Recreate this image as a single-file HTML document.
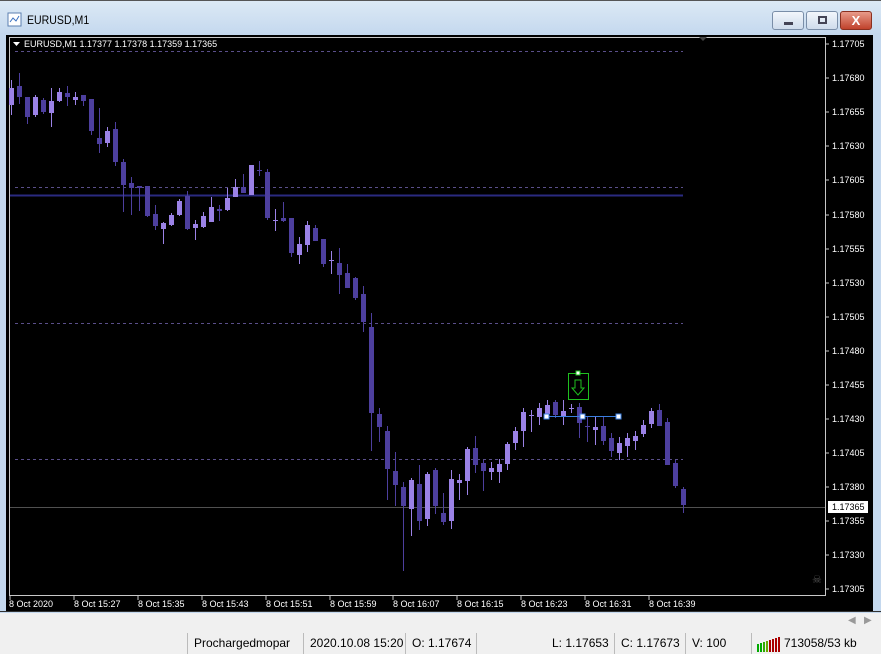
<!DOCTYPE html>
<html><head><meta charset="utf-8"><style>
*{margin:0;padding:0;box-sizing:border-box}
body{width:881px;height:654px;overflow:hidden;background:#f0f0f0;font-family:"Liberation Sans",sans-serif;position:relative}
.tb{position:absolute;left:0;top:0;width:881px;height:35px;background:linear-gradient(#dce9f5,#c4d8ee);border-top:1px solid #555}
.frame{position:absolute;left:0;top:33px;width:881px;height:580px;background:#c4d8ee}
.chart{position:absolute;left:6px;top:35px;width:867px;height:576px;background:#000}
.btn{position:absolute;top:11px;width:32px;height:19px;border:1px solid #7a8ea8;border-radius:3px;background:linear-gradient(#f2f6fb,#cfdcec)}
.t{position:absolute;white-space:nowrap}
.sb{position:absolute;top:633px;height:21px;font-size:12px;color:#000;border-left:1px solid #bbb;padding-left:6px;line-height:21px}
</style></head><body>
<div class="tb"></div>
<div class="frame"></div>
<svg style="position:absolute;left:7px;top:12px" width="16" height="16"><rect x="1" y="1" width="13" height="13" fill="#fff" stroke="#5b7fb0"/><path d="M3 10l3-4 3 3 3-5" stroke="#3a70c0" fill="none"/></svg>
<div class="t" style="left:27px;top:13px;font-size:12px;color:#000;transform:scaleX(0.88);transform-origin:left">EURUSD,M1</div>
<div class="btn" style="left:772px"><div style="position:absolute;left:11px;top:10px;width:9px;height:3px;background:#445;"></div></div>
<div class="btn" style="left:806px"><div style="position:absolute;left:11px;top:4px;width:9px;height:8px;border:2px solid #445"></div></div>
<div class="btn" style="left:840px;background:linear-gradient(#e89b8a,#c0422c);border-color:#8a3020;color:#fff;font-weight:bold;font-size:13px;text-align:center;line-height:17px">X</div>
<div class="chart"></div>
<svg id="c" style="position:absolute;left:0;top:0" width="881" height="612" font-family="Liberation Sans" font-size="9"></svg>
<div style="position:absolute;left:0;top:611px;width:881px;height:1px;background:#333"></div>
<div class="t" style="left:848px;top:615px;font-size:10px;color:#999">&#9664;&nbsp;&nbsp;&nbsp;&#9654;</div>
<div style="position:absolute;left:0;top:632px;width:881px;height:22px;background:#f0f0f0"></div>
<div class="sb" style="left:187px">Prochargedmopar</div>
<div class="sb" style="left:303px">2020.10.08 15:20</div>
<div class="sb" style="left:405px">O: 1.17674</div>
<div class="sb" style="left:476px;width:70px"></div>
<div class="t" style="left:552px;top:633px;font-size:12px;line-height:21px">L: 1.17653</div>
<div class="sb" style="left:614px">C: 1.17673</div>
<div class="sb" style="left:685px">V: 100</div>
<div class="sb" style="left:751px;width:130px"></div>
<svg style="position:absolute;left:757px;top:637px" width="24" height="15"><g stroke-width="2"><path d="M1 15V7" stroke="#0a0"/><path d="M4 15V6" stroke="#0a0"/><path d="M7 15V5" stroke="#3a0"/><path d="M10 15V4" stroke="#6a0"/><path d="M13 15V3" stroke="#a00"/><path d="M16 15V2" stroke="#a00"/><path d="M19 15V1" stroke="#a00"/><path d="M22 15V0" stroke="#a00"/></g></svg>
<div class="t" style="left:784px;top:633px;font-size:12px;line-height:21px">713058/53 kb</div>
<script>
var s=document.getElementById('c'),h='';
function L(x1,y1,x2,y2,c,w,d){h+='<line x1="'+x1+'" y1="'+y1+'" x2="'+x2+'" y2="'+y2+'" stroke="'+c+'" stroke-width="'+(w||1)+'"'+(d?' stroke-dasharray="'+d+'"':'')+'/>';}
h+='<rect x="9.5" y="37.5" width="816" height="558" fill="none" stroke="#c8c8c8"/>';
[51,187,323,459].forEach(function(y){L(15,y+.5,683,y+.5,'#5a4f8a',1,'3,3')});
L(10,195.5,683,195.5,'#2a2a80',2);
L(10,507.5,825,507.5,'#505050',1);
var B='#9b82e6',D='#4d3f9e';
var c=[[88,105,80,115,1],[86,97,73,104,0],[97,117,97,124,0],[97,115,95,117,1],[100,112,98,114,0],[101,113,88,127,1],[92,101,88,102,1],[93,97,86,106,0],[97,100,92,105,1],[95,101,95,106,0],[99,131,99,135,0],[138,144,108,153,0],[131,143,127,147,1],[129,162,122,166,0],[162,185,159,212,0],[183,188,177,215,0],[186,188,186,211,0],[186,216,186,217,0],[214,226,205,230,0],[223,229,222,244,1],[215,225,213,226,1],[201,215,199,216,1],[196,229,191,230,0],[224,228,220,240,1],[216,227,212,228,1],[207,222,197,222,1],[209,211,205,221,0],[198,210,188,211,1],[187,197,179,197,1],[187,193,174,193,0],[165,195,165,195,1],[170,171,161,176,0],[172,218,169,220,0],[220,221,209,231,1],[218,221,202,222,0],[218,253,218,257,0],[244,255,237,264,1],[225,245,221,252,1],[228,241,225,241,0],[239,264,239,267,0],[260,261,251,274,1],[263,275,248,294,0],[273,288,264,288,0],[278,298,277,300,0],[294,322,286,332,0],[327,413,313,451,0],[414,427,408,442,0],[431,469,426,500,0],[471,485,452,506,0],[487,506,482,571,0],[480,509,478,536,1],[484,521,465,530,0],[474,519,472,526,1],[470,506,468,514,0],[513,522,493,525,0],[479,521,470,529,1],[480,483,474,500,1],[449,481,447,495,1],[448,465,436,473,0],[463,471,460,491,0],[468,472,462,480,1],[464,472,459,483,1],[444,464,442,470,1],[431,443,427,450,1],[412,431,408,447,1],[415,416,410,432,1],[408,417,403,425,1],[405,414,400,418,1],[402,415,400,418,0],[411,417,400,425,1],[408,409,404,413,1],[407,423,403,438,0],[426,427,417,442,0],[427,430,417,445,1],[426,441,417,445,0],[438,451,433,457,0],[443,453,437,460,1],[438,446,433,457,1],[436,441,431,450,1],[425,434,420,437,1],[411,424,408,428,1],[410,426,404,426,0],[422,465,418,465,0],[463,486,460,488,0],[489,505,487,513,0]];
c.forEach(function(k,i){var x=11+8*i,col=k[4]?B:D;L(x+.5,k[2],x+.5,k[3],col,1);h+='<rect x="'+(x-2)+'" y="'+k[0]+'" width="5" height="'+Math.max(1,k[1]-k[0])+'" fill="'+col+'"/>';});
h+='<rect x="568.5" y="373.5" width="20" height="26" fill="none" stroke="#1fc01f"/><path d="M575 380v8h-3l6 7 6-7h-3v-8z" fill="none" stroke="#1fc01f"/><rect x="576" y="371" width="4" height="4" fill="#fff" stroke="#1fc01f"/>';
L(546,416.5,618,416.5,'#3a7ee0',1);
[546,582,618].forEach(function(x){h+='<rect x="'+(x-2)+'" y="414" width="5" height="5" fill="#fff" stroke="#3a7ee0"/>'});
h+='<path d="M699 37l4 4 4-4z" fill="#444"/>';
h+='<text x="812" y="583" fill="#555" font-size="11">&#9760;</text>';
s.innerHTML+=h;
</script>
<svg style="position:absolute;left:0;top:0" width="881" height="612" font-family="Liberation Sans" font-size="9" fill="#fff">
<path d="M13 42h7l-3.5 4z" fill="#fff"/>
<text x="24" y="47">EURUSD,M1  1.17377 1.17378 1.17359 1.17365</text>
<g stroke="#c8c8c8"><path d="M826 44h3M826 78h3M826 112h3M826 146h3M826 180h3M826 215h3M826 249h3M826 283h3M826 317h3M826 351h3M826 385h3M826 419h3M826 453h3M826 487h3M826 521h3M826 555h3M826 589h3"/>
<path d="M10 596v4M74 596v4M138 596v4M202 596v4M266 596v4M330 596v4M393 596v4M457 596v4M521 596v4M585 596v4M649 596v4"/></g>
<g>
<text x="832" y="47">1.17705</text><text x="832" y="81">1.17680</text><text x="832" y="115">1.17655</text><text x="832" y="149">1.17630</text><text x="832" y="183">1.17605</text><text x="832" y="218">1.17580</text><text x="832" y="252">1.17555</text><text x="832" y="286">1.17530</text><text x="832" y="320">1.17505</text><text x="832" y="354">1.17480</text><text x="832" y="388">1.17455</text><text x="832" y="422">1.17430</text><text x="832" y="456">1.17405</text><text x="832" y="490">1.17380</text><text x="832" y="524">1.17355</text><text x="832" y="558">1.17330</text><text x="832" y="592">1.17305</text>
</g>
<rect x="828" y="501" width="40" height="12" fill="#fff"/><text x="832" y="510" fill="#000">1.17365</text>
<g>
<text x="9" y="607">8 Oct 2020</text><text x="74" y="607">8 Oct 15:27</text><text x="138" y="607">8 Oct 15:35</text><text x="202" y="607">8 Oct 15:43</text><text x="266" y="607">8 Oct 15:51</text><text x="330" y="607">8 Oct 15:59</text><text x="393" y="607">8 Oct 16:07</text><text x="457" y="607">8 Oct 16:15</text><text x="521" y="607">8 Oct 16:23</text><text x="585" y="607">8 Oct 16:31</text><text x="649" y="607">8 Oct 16:39</text>
</g>
</svg>
</body></html>
